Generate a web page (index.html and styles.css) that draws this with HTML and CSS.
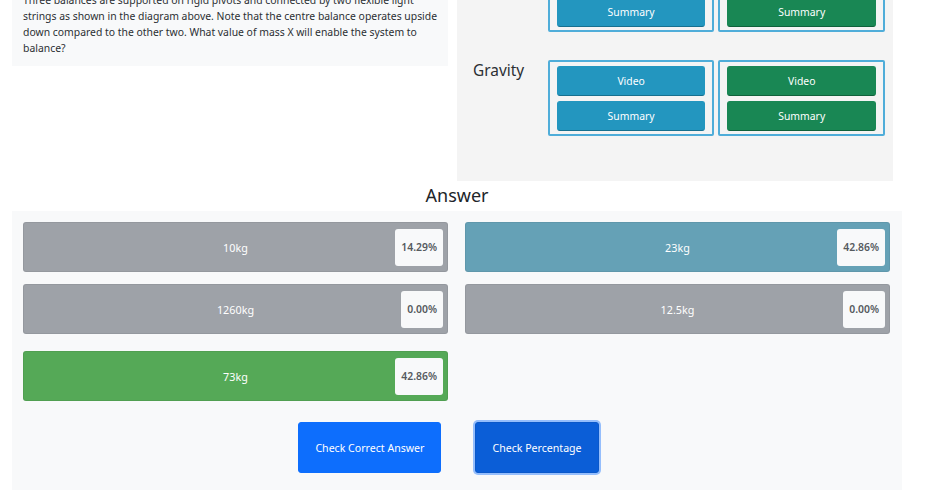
FILE: index.html
```html
<!DOCTYPE html>
<html lang="en">
<head>
<meta charset="utf-8">
<title>Balances question</title>
<link rel="stylesheet" href="styles.css">
</head>
<body>
<div class="page">
  <div class="top">
    <div class="question">
      <p>Three balances are supported on rigid pivots and connected by two flexible light strings as shown in the diagram above. Note that the centre balance operates upside down compared to the other two. What value of mass X will enable the system to balance?</p>
    </div>
    <div class="resources">
      <div class="res-row">
        <div class="res-label"></div>
        <div class="res-group">
          <button class="rbtn info">Video</button>
          <button class="rbtn info">Summary</button>
        </div>
        <div class="res-group">
          <button class="rbtn success">Video</button>
          <button class="rbtn success">Summary</button>
        </div>
      </div>
      <div class="res-row">
        <div class="res-label">Gravity</div>
        <div class="res-group">
          <button class="rbtn info">Video</button>
          <button class="rbtn info">Summary</button>
        </div>
        <div class="res-group">
          <button class="rbtn success">Video</button>
          <button class="rbtn success">Summary</button>
        </div>
      </div>
    </div>
  </div>

  <h3 class="answer-title">Answer</h3>

  <div class="answers">
    <div class="grid">
      <div class="bar gray"><span class="label">10kg</span><span class="pct">14.29%</span></div>
      <div class="bar teal"><span class="label">23kg</span><span class="pct">42.86%</span></div>
      <div class="bar gray"><span class="label">1260kg</span><span class="pct">0.00%</span></div>
      <div class="bar gray"><span class="label">12.5kg</span><span class="pct">0.00%</span></div>
    </div>
    <div class="grid last">
      <div class="bar green"><span class="label">73kg</span><span class="pct">42.86%</span></div>
    </div>
    <div class="actions">
      <button class="abtn">Check Correct Answer</button>
      <button class="abtn focus">Check Percentage</button>
    </div>
  </div>
</div>
</body>
</html>
```
FILE: styles.css
```css
* { box-sizing: border-box; }
html, body { margin: 0; padding: 0; background: #fff; }
body {
  font-family: "Noto Sans", "Open Sans", sans-serif;
  color: #212529;
  font-size: 10.4px;
  overflow: hidden;
}
.page {
  padding: 0 0 0 12px;
  width: 902px;
}
.top {
  display: flex;
  gap: 9px;
  margin-top: -53px;
  align-items: flex-start;
}
.question {
  width: 436px;
  margin-top: 37px;
  background: #f8f9fa;
  padding: 8px 4px 10px 11px;
}
.question p {
  margin: 0;
  line-height: 16px;
  font-size: 10.4px;
  color: #2b2f33;
}
.resources {
  width: 436px;
  background: #f4f4f4;
  padding: 9px 8px 45px 16px;
  display: flex;
  flex-direction: column;
  gap: 28px;
}
.res-row {
  display: flex;
  gap: 4px;
  align-items: flex-start;
}
.res-label {
  width: 71px;
  font-size: 15.4px;
  line-height: 22px;
  color: #2b2f33;
}
.res-group {
  width: 167px;
  border: 2px solid #4fadd9;
  border-radius: 2px;
  padding: 4px 7px 3px;
  display: flex;
  flex-direction: column;
  gap: 5px;
}
.rbtn {
  font-family: inherit;
  font-size: 10.4px;
  color: #fff;
  height: 30px;
  border-radius: 3px;
  border: 1px solid transparent;
  cursor: pointer;
}
.rbtn.info { background: #2396bf; border-color: #2396bf; border-bottom-color: #17708f; }
.rbtn.success { background: #198754; border-color: #198754; border-bottom-color: #10613b; }

.answer-title {
  margin: 2px 0 4px;
  text-align: center;
  font-weight: 400;
  font-size: 18px;
  line-height: 24px;
  color: #212529;
}
.answers {
  background: #f8f9fa;
  padding: 11px 11px 17px;
}
.grid {
  display: grid;
  grid-template-columns: 425px 425px;
  column-gap: 17px;
  row-gap: 12px;
}
.grid.last { margin-top: 17px; }
.bar {
  display: grid;
  height: 50px;
  border-radius: 3px;
  border: 1px solid rgba(0,0,0,0.06);
  align-items: center;
}
.bar > span { grid-area: 1 / 1; }
.bar .label {
  justify-self: center;
  color: #fff;
  font-size: 10.8px;
}
.bar .pct {
  justify-self: end;
  margin-right: 4px;
  background: #f8f9fa;
  border-radius: 3px;
  height: 37px;
  line-height: 37px;
  padding: 0 6px;
  font-weight: 600;
  color: #555a5e;
  font-size: 10.4px;
}
.bar.gray { background: #9ea2a8; }
.bar.teal { background: #65a1b6; }
.bar.green { background: #55a957; }

.actions {
  display: flex;
  justify-content: center;
  gap: 34px;
  margin-top: 21px;
  padding-right: 17px;
}
.abtn {
  font-family: inherit;
  font-size: 10.6px;
  color: #fff;
  background: #0d6efd;
  border: 1px solid #0d6efd;
  border-radius: 3px;
  height: 51px;
  padding: 0 16px;
  cursor: pointer;
}
.abtn.focus {
  background: #0b5ed7;
  border-color: #0a58ca;
  box-shadow: 0 0 0 2px rgba(49,132,253,0.5);
}
```
